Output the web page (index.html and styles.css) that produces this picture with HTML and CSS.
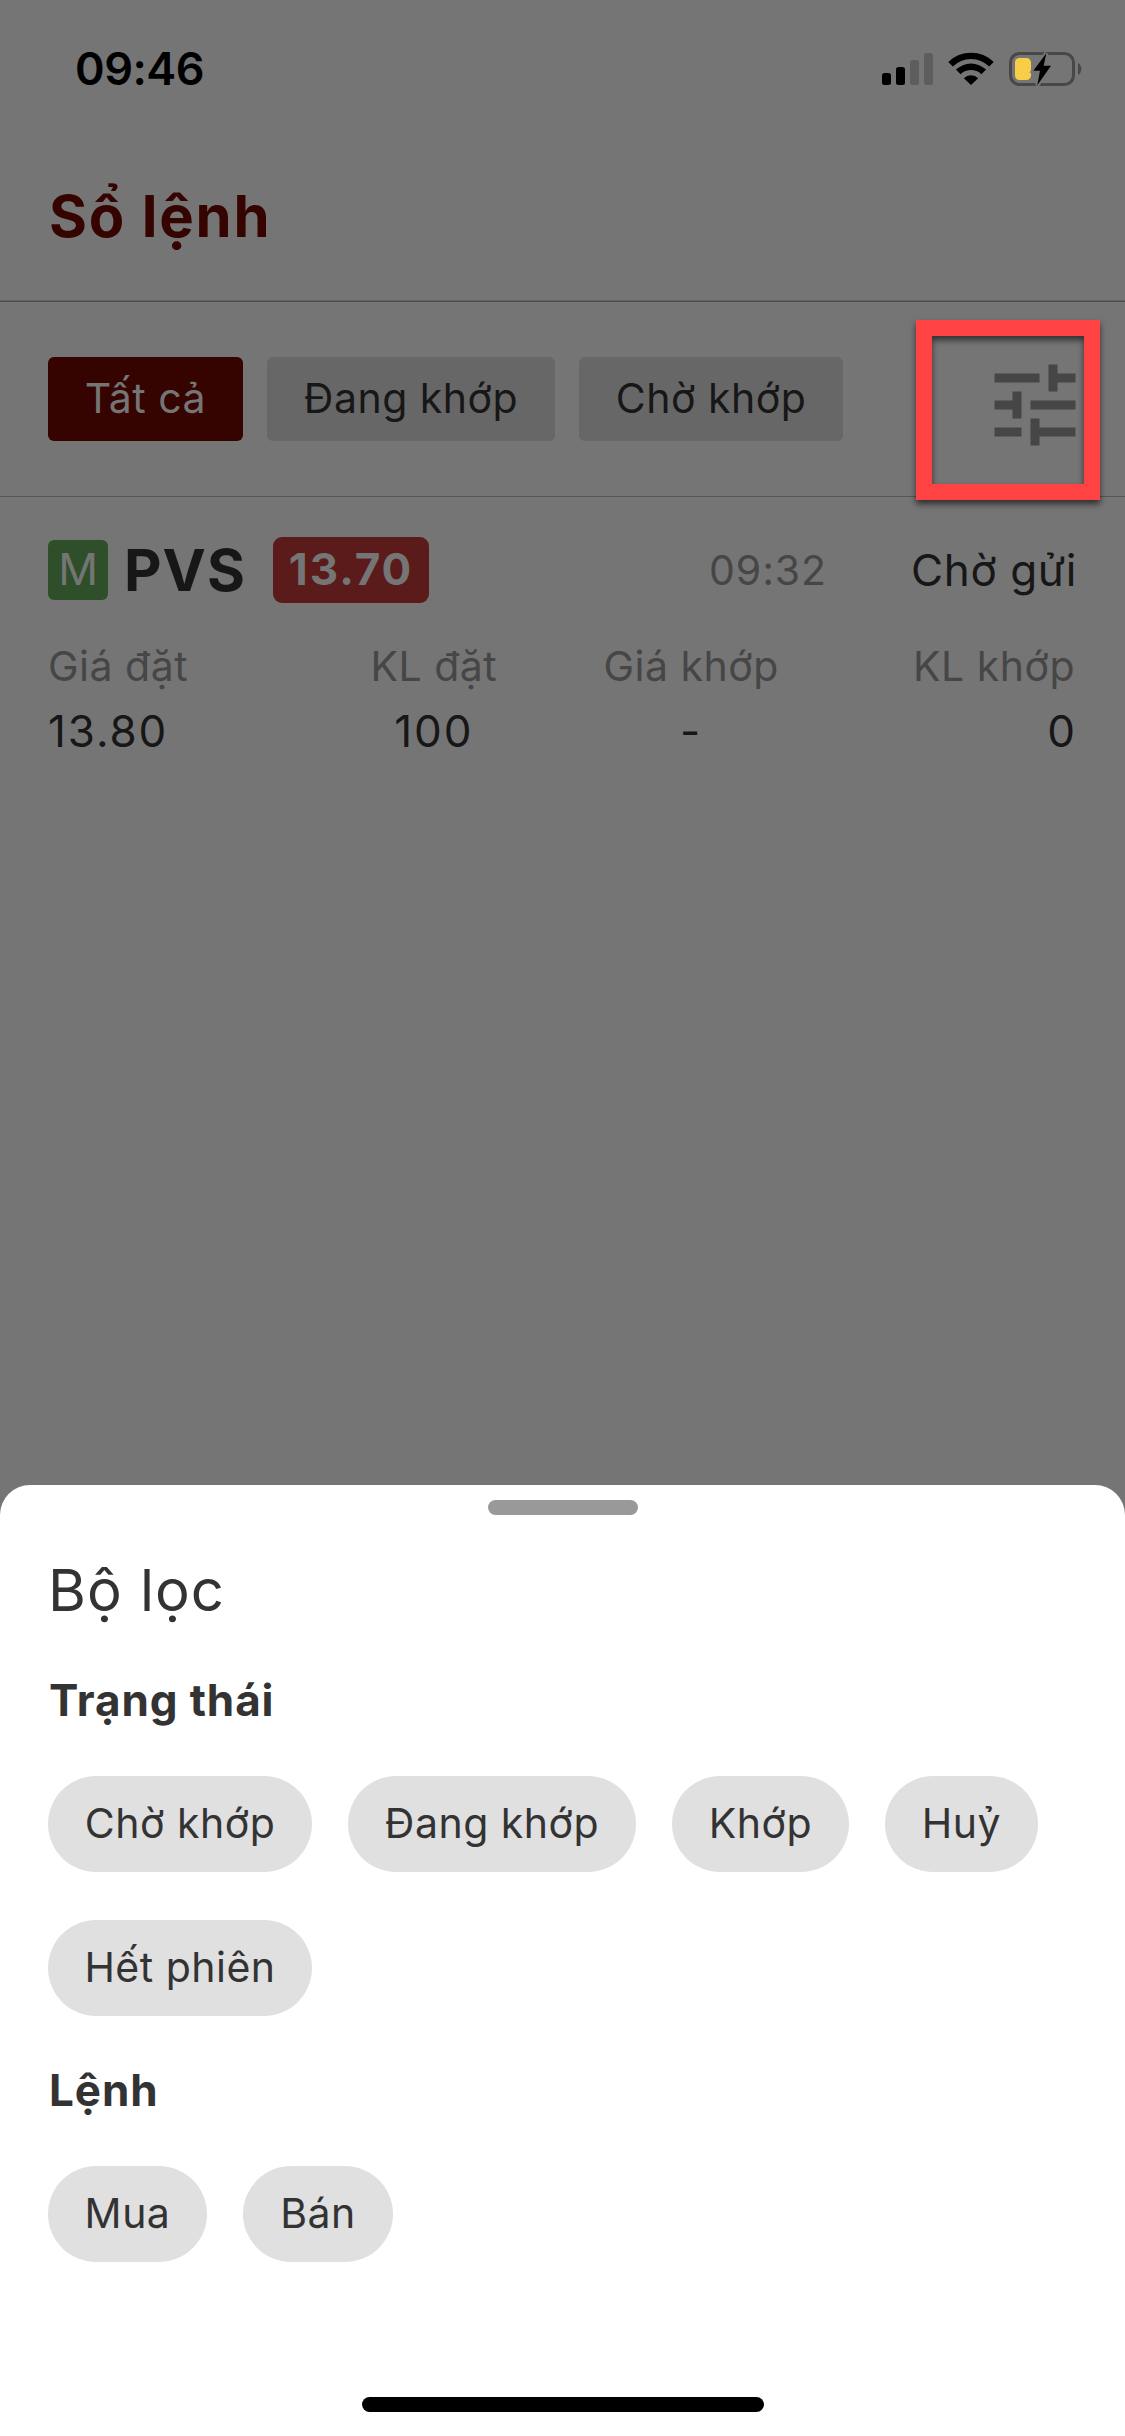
FILE: index.html
```html
<!DOCTYPE html>
<html lang="vi">
<head>
<meta charset="utf-8">
<title>Sổ lệnh</title>
<link rel="stylesheet" href="styles.css">
</head>
<body>
<main class="screen">
  <header class="header">
    <div class="statusbar">
      <span class="clock">09:46</span>
      <svg class="status-icons" width="204" height="40" viewBox="0 0 204 40" aria-hidden="true">
        <rect x="2" y="23" width="9" height="12" rx="2.5"/>
        <rect x="16" y="17" width="9" height="18" rx="2.5"/>
        <rect class="signal-off" x="30" y="10" width="9" height="25" rx="2.5"/>
        <rect class="signal-off" x="44" y="3" width="9" height="32" rx="2.5"/>
        <path d="M68.3 12A32.3 32.3 0 0 1 113.7 12L109.2 16.5A25.6 25.6 0 0 0 72.8 16.5Z"/>
        <path d="M75.9 19.6A22 22 0 0 1 106.1 19.6L101.4 24.2A15 15 0 0 0 80.6 24.2Z"/>
        <path d="M83.8 28.2A10.5 10.5 0 0 1 98.2 28.2L91 35Z"/>
        <rect class="battery-shell" x="130.5" y="3.5" width="63" height="31" rx="9"/>
        <path class="battery-cap" d="M198 13A7 7 0 0 1 198 25Z"/>
        <rect class="battery-fill" x="135" y="8" width="16" height="22" rx="4.5"/>
        <path class="bolt-gap" d="M166.3 3.3L153.3 20.7H160L157.3 35.3L171 15.7H163.7Z"/>
        <path d="M166.3 3.3L153.3 20.7H160L157.3 35.3L171 15.7H163.7Z"/>
      </svg>
    </div>
    <h1 class="title">Sổ lệnh</h1>
  </header>

  <nav class="filters">
    <button class="tab tab-all active">Tất cả</button>
    <button class="tab tab-matching">Đang khớp</button>
    <button class="tab tab-waiting">Chờ khớp</button>
    <div class="highlight">
      <svg class="tune" width="108" height="108" viewBox="0 0 24 24" aria-hidden="true"><path d="M3 17v2h6v-2H3zM3 5v2h10V5H3zm10 16v-2h8v-2h-8v-2h-2v6h2zM7 9v2H3v2h4v2h2V9H7zm14 4v-2H11v2h10zm-6-4h2V7h4V5h-4V3h-2v6z"/></svg>
    </div>
  </nav>

  <section class="order">
    <div class="order-head">
      <span class="side">M</span>
      <strong class="symbol">PVS</strong>
      <span class="price">13.70</span>
      <span class="time">09:32</span>
      <span class="state">Chờ gửi</span>
    </div>
    <dl class="order-data">
      <div><dt>Giá đặt</dt><dd>13.80</dd></div>
      <div><dt>KL đặt</dt><dd>100</dd></div>
      <div><dt>Giá khớp</dt><dd>-</dd></div>
      <div><dt>KL khớp</dt><dd>0</dd></div>
    </dl>
  </section>

  <section class="sheet">
    <div class="handle"></div>
    <h2 class="sheet-title">Bộ lọc</h2>
    <h3 class="group-title">Trạng thái</h3>
    <div class="chips">
      <button class="chip w-264">Chờ khớp</button>
      <button class="chip w-288">Đang khớp</button>
      <button class="chip w-177">Khớp</button>
      <button class="chip w-153">Huỷ</button>
      <button class="chip w-264">Hết phiên</button>
    </div>
    <h3 class="group-title">Lệnh</h3>
    <div class="chips">
      <button class="chip w-159">Mua</button>
      <button class="chip w-150">Bán</button>
    </div>
    <div class="home-indicator"></div>
  </section>
</main>
</body>
</html>
```
FILE: styles.css
```css
* { box-sizing: border-box; margin: 0; padding: 0; }

body {
  width: 1125px;
  background: #757575;
  color: #171717;
  font-family: Inter, "Noto Sans", sans-serif;
}

button {
  border: 0;
  font-family: inherit;
  color: inherit;
  white-space: nowrap;
}

.screen {
  display: flex;
  flex-direction: column;
  height: 2436px;
  overflow: hidden;
}

/* Header */
.header {
  height: 302px;
  border-bottom: 1px solid #4b4b4b;
  box-shadow: inset 0 -1px 0 #636363;
}

.statusbar {
  display: flex;
  justify-content: space-between;
  padding: 49px 41px 0 75px;
  height: 132px;
}

.clock {
  font-size: 45px;
  font-weight: 600;
  line-height: 40px;
  letter-spacing: -0.5px;
  color: #000;
}

.status-icons { margin-top: 1px; }
.signal-off { fill: #5d5d5d; }
.battery-shell { fill: none; stroke: #484848; stroke-width: 3; }
.battery-cap { fill: #484848; }
.battery-fill { fill: #f7ce46; }
.bolt-gap { fill: #757575; stroke: #757575; stroke-width: 4; }

.title {
  padding-left: 49px;
  height: 168px;
  line-height: 168px;
  font-size: 58px;
  font-weight: 700;
  letter-spacing: 1.8px;
  color: #350400;
}

/* Status tabs */
.filters {
  display: flex;
  align-items: flex-start;
  gap: 24px;
  height: 195px;
  padding: 55px 25px 0 48px;
  border-bottom: 1px solid #565656;
}

.tab {
  height: 84px;
  padding-bottom: 2px;
  border-radius: 6px;
  background: #676767;
  font-size: 41px;
  letter-spacing: 0.5px;
}

.tab-all { width: 195px; }
.tab-matching { width: 288px; }
.tab-waiting { width: 264px; }

.tab.active {
  background: #350400;
  color: #757575;
}

.highlight {
  display: flex;
  justify-content: flex-end;
  flex: none;
  width: 184px;
  height: 180px;
  margin: -37px 0 0 auto;
  padding: 15px 0;
  border: 16px solid #ff4242;
  box-shadow: 0 4px 6px rgba(0, 0, 0, 0.6), inset 0 4px 6px rgba(0, 0, 0, 0.6);
}

.tune {
  flex: none;
  margin-right: -5px;
  fill: #464646;
  position: relative;
  z-index: -1;
}

/* Order row */
.order { padding: 33px 48px 0; }

.order-head {
  display: flex;
  align-items: center;
  height: 80px;
}

.side {
  width: 60px;
  height: 60px;
  border-radius: 6px;
  background: #2f4f2a;
  color: #757575;
  font-size: 44px;
  line-height: 58px;
  text-align: center;
}

.symbol {
  width: 147px;
  margin-left: 16px;
  font-size: 58px;
  font-weight: 700;
  line-height: 80px;
  letter-spacing: 1px;
}

.price {
  width: 156px;
  height: 66px;
  margin-left: 2px;
  border-radius: 9px;
  background: #5a1b1a;
  color: #757575;
  font-size: 44px;
  font-weight: 700;
  line-height: 64px;
  letter-spacing: 2px;
  text-align: center;
}

.time {
  margin-left: auto;
  font-size: 41px;
  letter-spacing: 0.9px;
  color: #464646;
}

.state {
  width: 250px;
  font-size: 44px;
  letter-spacing: 0.6px;
  text-align: right;
}

.order-data {
  display: grid;
  grid-template-columns: repeat(4, 1fr);
  margin-top: 24px;
  line-height: 65px;
  text-align: center;
}

.order-data div:first-child { text-align: left; }
.order-data div:last-child { text-align: right; }
.order-data div:last-child dt { padding-right: 2px; }

.order-data dt {
  font-size: 41px;
  letter-spacing: 0.5px;
  color: #464646;
}

.order-data dd {
  font-size: 44px;
  letter-spacing: 1.9px;
}

/* Filter sheet */
.sheet {
  display: flex;
  flex-direction: column;
  height: 951px;
  margin-top: auto;
  padding: 15px 48px 24px;
  border-radius: 30px 30px 0 0;
  background: #fff;
  color: #333;
}

.handle {
  align-self: center;
  width: 150px;
  height: 15px;
  border-radius: 8px;
  background: #999;
}

.sheet-title {
  margin-top: 35px;
  font-size: 58px;
  font-weight: 400;
  line-height: 80px;
  letter-spacing: 1px;
}

.group-title {
  margin-top: 50px;
  padding-left: 1px;
  font-size: 44px;
  font-weight: 700;
  line-height: 40px;
  letter-spacing: 0.9px;
}

.chips {
  display: flex;
  flex-wrap: wrap;
  gap: 48px 36px;
  margin-top: 56px;
}

.chips + .group-title { margin-top: 54px; }

.chip {
  height: 96px;
  padding-bottom: 2px;
  border-radius: 48px;
  background: #e0e0e0;
  font-size: 41px;
  letter-spacing: 0.5px;
}

.w-150 { width: 150px; }
.w-153 { width: 153px; }
.w-159 { width: 159px; }
.w-177 { width: 177px; }
.w-264 { width: 264px; }
.w-288 { width: 288px; }

.home-indicator {
  align-self: center;
  width: 402px;
  height: 15px;
  margin-top: auto;
  border-radius: 8px;
  background: #000;
}
```
